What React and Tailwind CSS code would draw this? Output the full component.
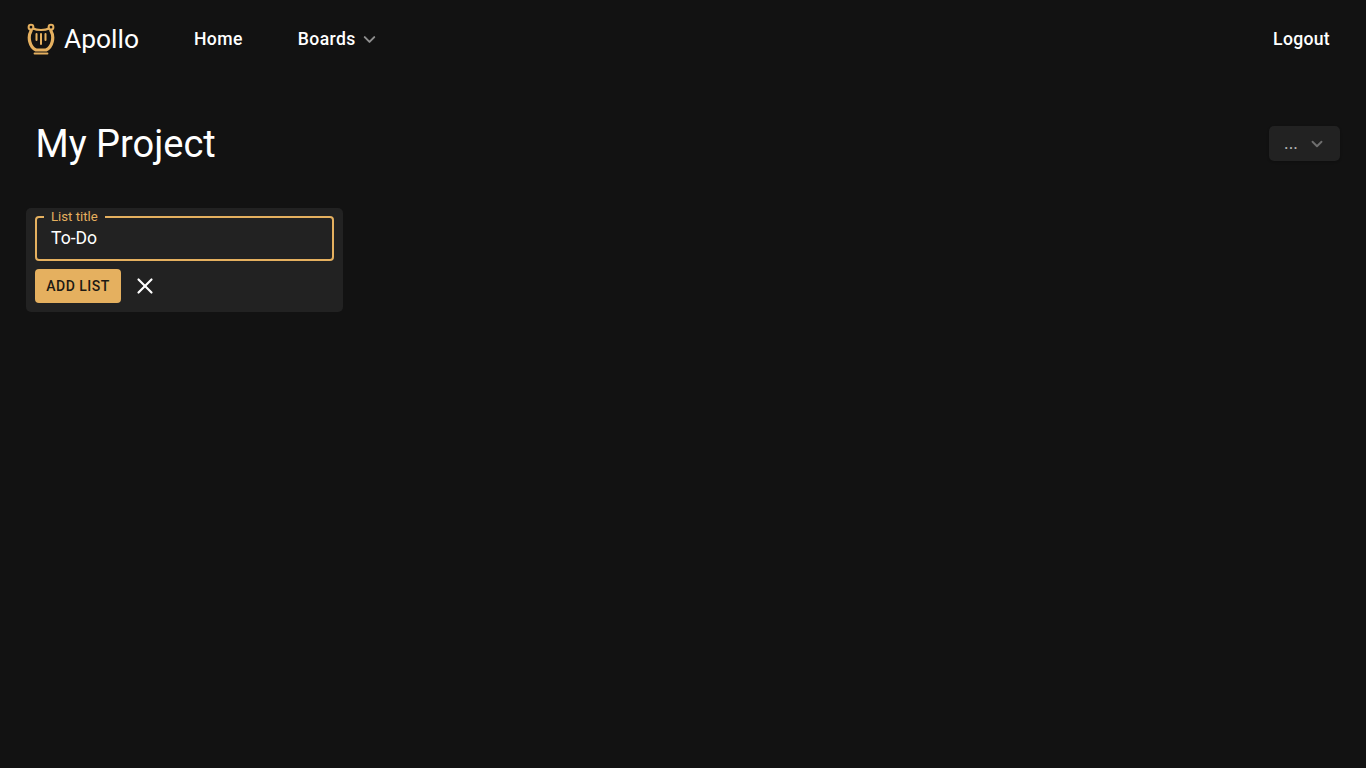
import React from "react";
import { ChevronDown, X } from "lucide-react";

const LyreLogo = () => (
    <svg width="28" height="32" viewBox="0 0 28 32" fill="none" stroke="#e5b05f" strokeLinecap="round">
        <circle cx="4" cy="4.2" r="2.4" strokeWidth="2" />
        <circle cx="24" cy="4.2" r="2.4" strokeWidth="2" />
        <path d="M6 5.5C10 7.5 18 7.5 22 5.5" strokeWidth="2" />
        <path d="M4 8C0.5 14 2.5 24 9 27H19C25.5 24 27.5 14 24 8" strokeWidth="3.2" />
        <path d="M9.5 11V17M14 11V21M18.5 11V17" strokeWidth="2" />
        <path d="M7.5 30.5H20.5" strokeWidth="1.8" />
    </svg>
);

const App = () => {
    return (
        <div className="min-h-screen bg-[#121212] font-['Roboto',sans-serif] text-white">
            {/* NAVBAR */}
            <header className="flex h-[78px] items-center justify-between pl-[27px] pr-[36px]">
                <div className="flex items-center">
                    <div className="flex items-center gap-[9px]">
                        <LyreLogo />
                        <span className="text-[26.4px] leading-none">Apollo</span>
                    </div>
                    <nav className="ml-[55px] flex items-center gap-[55px] text-[17.6px] font-medium tracking-[0.4px]">
                        <a>Home</a>
                        <a className="flex items-center gap-[4px]">
                            Boards
                            <ChevronDown size={19} strokeWidth={2.5} className="mt-[2px] text-[#8f8f8f]" />
                        </a>
                    </nav>
                </div>
                <a className="text-[17.6px] font-medium tracking-[0.3px]">Logout</a>
            </header>

            {/* TITLE ROW */}
            <div className="mt-[48px] flex h-[36px] items-center justify-between pl-[35.5px] pr-[26px]">
                <h1 className="text-[38px] font-normal leading-none">My Project</h1>
                <button className="-mt-[1px] flex h-[35px] w-[71px] items-center rounded-[5px] bg-[#222222] pl-[15px] text-[17.6px] text-[#b5b5b5] shadow-sm">
                    <span>...</span>
                    <ChevronDown size={18} strokeWidth={2.5} className="ml-[10px] text-[#6f6f6f]" />
                </button>
            </div>

            {/* NEW LIST FORM */}
            <div className="ml-[26px] mt-[46px] w-[317px] rounded-[5px] bg-[#222222] px-[9px] pb-[9px] pt-[8px]">
                <div className="relative flex h-[45px] items-center rounded-[4px] border-2 border-[#e5b05f] pl-[14px] text-[17.6px]">
                    <span className="absolute -top-[8px] left-[7px] bg-[#222222] px-[7px] text-[13.2px] leading-[14px] text-[#e5b05f]">
                        List title
                    </span>
                    To-Do
                </div>
                <div className="mt-[8px] flex items-center">
                    <button className="flex h-[34px] w-[86px] items-center justify-center rounded-[4px] bg-[#e5b05f] text-[14px] font-medium tracking-[0.5px] text-[#1d1a14]">
                        ADD LIST
                    </button>
                    <X size={26} strokeWidth={2} className="ml-[10.5px] text-white" />
                </div>
            </div>
        </div>
    );
};

export default App;
